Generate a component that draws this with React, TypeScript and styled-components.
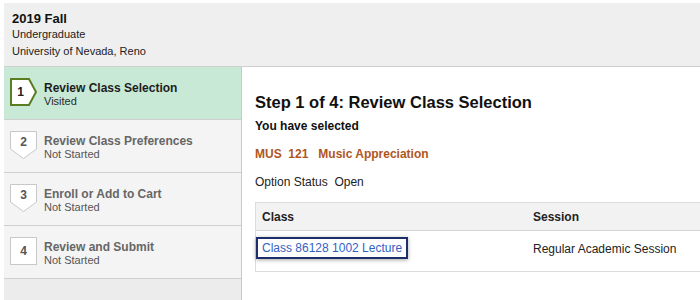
import React from "react";
import styled, { createGlobalStyle } from "styled-components";

const GlobalStyle = createGlobalStyle`
  body {
    margin: 0;
    background: #fff;
    font-family: Arial, "Liberation Sans", Helvetica, sans-serif;
    color: #222;
    overflow: hidden;
  }
`;

const Page = styled.div`
  width: 700px;
  height: 300px;
  box-sizing: border-box;
  padding: 3px 0 0 4px;
  overflow: hidden;
`;

const Header = styled.div`
  height: 64px;
  box-sizing: border-box;
  padding: 8px 8px 0;
  background: #efefef;
  border-bottom: 1px solid #cfcfcf;
`;

const Term = styled.div`
  font-size: 13px;
  font-weight: bold;
  line-height: 15px;
  color: #111;
`;

const HeaderLine = styled.div`
  font-size: 11px;
  line-height: 17px;
  color: #222;
  &:first-of-type {
    margin-top: -2px;
  }
`;

const Body = styled.div`
  display: flex;
  height: 233px;
`;

const Sidebar = styled.div`
  width: 237px;
  flex-shrink: 0;
  background: #ececec;
  border-right: 1px solid #c9c9c9;
  display: flex;
  flex-direction: column;
`;

const StepRow = styled.div<{ $active?: boolean }>`
  height: 52px;
  border-bottom: 1px solid #cfcfcf;
  background: ${(p) => (p.$active ? "#c7e9d6" : "#f4f4f4")};
  display: flex;
  align-items: center;
  padding-left: 6px;
  gap: 7px;
`;

const Badge = styled.div`
  position: relative;
  width: 27px;
  height: 28px;
  flex-shrink: 0;
  margin-top: -2px;
`;

const BadgeNum = styled.span<{ $active?: boolean; $down?: boolean }>`
  position: absolute;
  left: 0;
  top: ${(p) => (p.$down ? "4px" : "7px")};
  width: ${(p) => (p.$active ? "21px" : "27px")};
  text-align: center;
  font-size: 12px;
  line-height: 14px;
  font-weight: bold;
  color: ${(p) => (p.$active ? "#222" : "#555")};
`;

const StepText = styled.div`
  display: flex;
  flex-direction: column;
  padding-top: 3px;
`;

const StepTitle = styled.span<{ $active?: boolean }>`
  font-size: 12px;
  line-height: 14px;
  font-weight: bold;
  color: ${(p) => (p.$active ? "#1d1d1d" : "#666")};
`;

const StepStatus = styled.span<{ $active?: boolean }>`
  font-size: 11px;
  line-height: 13px;
  color: ${(p) => (p.$active ? "#2a2a2a" : "#555")};
`;

const Main = styled.div`
  flex: 1;
  padding: 25px 0 0 13px;
  background: #fff;
`;

const Heading = styled.h1`
  margin: 0 0 7px;
  font-size: 16.5px;
  line-height: 20px;
  font-weight: bold;
  color: #111;
`;

const Selected = styled.div`
  font-size: 12px;
  line-height: 14px;
  font-weight: bold;
  color: #111;
  margin-bottom: 14px;
`;

const Course = styled.div`
  font-size: 12px;
  line-height: 14px;
  font-weight: bold;
  color: #b0561e;
  white-space: pre;
  margin-bottom: 14px;
`;

const Status = styled.div`
  font-size: 12px;
  line-height: 14px;
  color: #222;
  white-space: pre;
  margin-bottom: 13px;
`;

const Table = styled.div`
  width: 490px;
  border: 1px solid #dcdcdc;
  display: grid;
  grid-template-columns: 271px 1fr;
  font-size: 12px;
  line-height: 14px;
`;

const HeadCell = styled.div`
  background: #f2f2f2;
  border-bottom: 1px solid #d4d4d4;
  padding: 7px 6px 6px;
  font-weight: bold;
  color: #222;
`;

const Cell = styled.div`
  padding: 6px 6px 12px;
  color: #222;
`;

const SessionCell = styled(Cell)`
  padding-top: 11px;
`;

const ClassLink = styled.a`
  display: inline-block;
  margin-left: -6px;
  padding: 2px 4px;
  border: 2px solid #1c2f6b;
  box-shadow: 0 1px 4px rgba(0, 0, 0, 0.35);
  color: #3162c4;
  text-decoration: none;
`;

const RightBadge = ({ n }: { n: string }) => (
  <Badge>
    <svg width="27" height="28" viewBox="0 0 27 28">
      <polygon points="1,1 19,1 26,14 19,27 1,27" fill="#fff" stroke="#5a7d22" strokeWidth="2" />
    </svg>
    <BadgeNum $active>{n}</BadgeNum>
  </Badge>
);

const DownBadge = ({ n }: { n: string }) => (
  <Badge>
    <svg width="27" height="28" viewBox="0 0 27 28">
      <polygon points="0.5,0.5 26.5,0.5 26.5,18 13.5,27.5 0.5,18" fill="#fff" stroke="#c8c8c8" strokeWidth="1" />
    </svg>
    <BadgeNum $down>{n}</BadgeNum>
  </Badge>
);

const SquareBadge = ({ n }: { n: string }) => (
  <Badge>
    <svg width="27" height="28" viewBox="0 0 27 28">
      <rect x="0.5" y="0.5" width="26" height="27" fill="#fff" stroke="#c8c8c8" strokeWidth="1" />
    </svg>
    <BadgeNum>{n}</BadgeNum>
  </Badge>
);

const steps = [
  { n: "1", title: "Review Class Selection", status: "Visited", kind: "right" },
  { n: "2", title: "Review Class Preferences", status: "Not Started", kind: "down" },
  { n: "3", title: "Enroll or Add to Cart", status: "Not Started", kind: "down" },
  { n: "4", title: "Review and Submit", status: "Not Started", kind: "square" },
];

const App = () => {
  return (
    <>
      <GlobalStyle />
      <Page>
        <Header>
          <Term>2019 Fall</Term>
          <HeaderLine>Undergraduate</HeaderLine>
          <HeaderLine>University of Nevada, Reno</HeaderLine>
        </Header>
        <Body>
          <Sidebar>
            {steps.map((s) => {
              const active = s.kind === "right";
              return (
                <StepRow key={s.n} $active={active}>
                  {s.kind === "right" && <RightBadge n={s.n} />}
                  {s.kind === "down" && <DownBadge n={s.n} />}
                  {s.kind === "square" && <SquareBadge n={s.n} />}
                  <StepText>
                    <StepTitle $active={active}>{s.title}</StepTitle>
                    <StepStatus $active={active}>{s.status}</StepStatus>
                  </StepText>
                </StepRow>
              );
            })}
          </Sidebar>
          <Main>
            <Heading>Step 1 of 4: Review Class Selection</Heading>
            <Selected>You have selected</Selected>
            <Course>{"MUS  121   Music Appreciation"}</Course>
            <Status>{"Option Status  Open"}</Status>
            <Table>
              <HeadCell>Class</HeadCell>
              <HeadCell>Session</HeadCell>
              <Cell>
                <ClassLink href="#">Class 86128 1002 Lecture</ClassLink>
              </Cell>
              <SessionCell>Regular Academic Session</SessionCell>
            </Table>
          </Main>
        </Body>
      </Page>
    </>
  );
};

export default App;
